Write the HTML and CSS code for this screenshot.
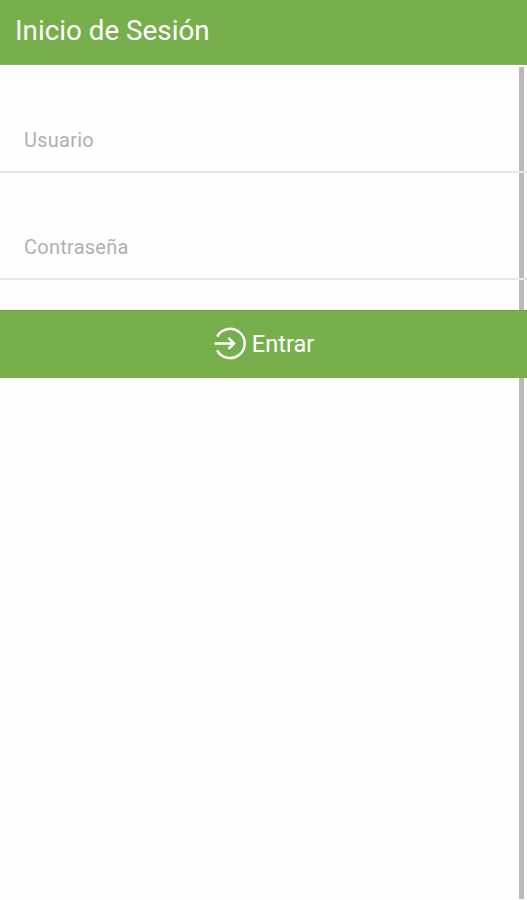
FILE: index.html
```html
<!DOCTYPE html>
<html lang="es">
<head>
  <meta charset="UTF-8" />
  <meta name="viewport" content="width=device-width, initial-scale=1.0" />
  <title>Inicio de Sesión</title>
  <link rel="stylesheet" href="styles.css">
</head>
<body>
  <header>
    <h1>Inicio de Sesión</h1>
  </header>

  <form class="login">
    <div class="field">
      <input type="text" name="usuario" placeholder="Usuario" aria-label="Usuario" />
    </div>
    <div class="field">
      <input type="password" name="clave" placeholder="Contraseña" aria-label="Contraseña" />
    </div>
    <button type="button">
      <svg class="icon" viewBox="0 0 32 32" width="32" height="32">
        <path d="M3.2 8.6A14.6 14.6 0 1 1 3.2 22.3" />
        <path d="M0.5 15.4H20M14.5 9.9L20 15.4L14.5 20.9" />
      </svg>
      <span>Entrar</span>
    </button>
  </form>

  <div class="scrollbar"></div>
</body>
</html>
```

FILE: styles.css
```css
* {
  box-sizing: border-box;
}
body {
  margin: 0;
  height: 900px;
  position: relative;
  overflow: hidden;
  font-family: Roboto, sans-serif;
  background: #fefefe;
}
header {
  height: 65px;
  padding: 0 15px;
  background: #77af4c;
  border-bottom: 1px solid #86b162;
  color: #fff;
}
h1 {
  margin: 0;
  font-size: 27.8px;
  font-weight: 400;
  line-height: 62px;
}
.field {
  height: 108px;
  padding: 45px 24px 0;
  border-bottom: 2px solid #e6e6e6;
  position: relative;
  z-index: 2;
}
.field + .field {
  height: 107px;
  padding-top: 44px;
}
input {
  display: block;
  width: 100%;
  height: 60px;
  padding: 0;
  border: none;
  outline: none;
  background: transparent;
  font-family: inherit;
  font-size: 20px;
  letter-spacing: 0.25px;
}
input::placeholder {
  color: #b0b0b0;
  opacity: 1;
}
button {
  display: flex;
  align-items: center;
  justify-content: center;
  gap: 6px;
  width: 100%;
  height: 68px;
  margin-top: 30px;
  padding: 0 0 2px 1px;
  border: none;
  border-top: 1px solid #6aa636;
  background: #77af4c;
  color: #fff;
  font-family: inherit;
  font-size: 23.5px;
  position: relative;
  z-index: 2;
}
.icon {
  fill: none;
  stroke: #fff;
  stroke-width: 2.5;
  overflow: visible;
}
/* sits over the page edge, under the lines and the button */
.scrollbar {
  position: absolute;
  top: 67px;
  right: 3px;
  width: 5px;
  height: 832px;
  background: #bababa;
}
```
